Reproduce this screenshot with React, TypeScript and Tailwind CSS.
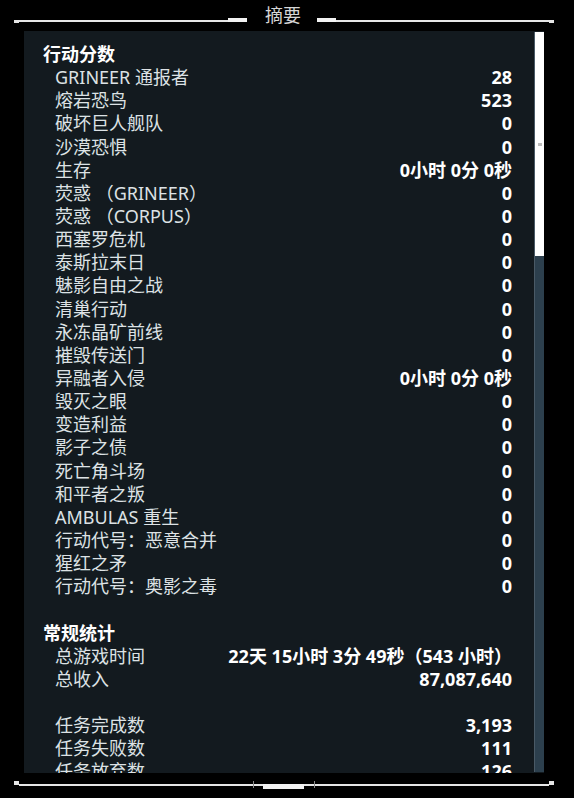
const missionScores: [string, string][] = [
  ["GRINEER 通报者", "28"],
  ["熔岩恐鸟", "523"],
  ["破坏巨人舰队", "0"],
  ["沙漠恐惧", "0"],
  ["生存", "0小时 0分 0秒"],
  ["荧惑 （GRINEER）", "0"],
  ["荧惑 （CORPUS）", "0"],
  ["西塞罗危机", "0"],
  ["泰斯拉末日", "0"],
  ["魅影自由之战", "0"],
  ["清巢行动", "0"],
  ["永冻晶矿前线", "0"],
  ["摧毁传送门", "0"],
  ["异融者入侵", "0小时 0分 0秒"],
  ["毁灭之眼", "0"],
  ["变造利益", "0"],
  ["影子之债", "0"],
  ["死亡角斗场", "0"],
  ["和平者之叛", "0"],
  ["AMBULAS 重生", "0"],
  ["行动代号：恶意合并", "0"],
  ["猩红之矛", "0"],
  ["行动代号：奥影之毒", "0"],
];

const Row = ({ label, value }: { label: string; value: string }) => (
  <div className="flex justify-between pl-[12px] h-[23.15px]">
    <span className="text-[#dde2e5] whitespace-nowrap">{label}</span>
    <span className="text-white font-bold whitespace-nowrap">{value}</span>
  </div>
);

const Header = ({ title }: { title: string }) => (
  <div className="h-[23.15px] font-bold text-white">{title}</div>
);

export default function App() {
  return (
    <div
      className="w-[574px] h-[798px] bg-black flex flex-col overflow-hidden"
      style={{ fontFamily: '"Noto Sans", "Noto Sans CJK SC", sans-serif' }}
    >
      {/* top frame */}
      <div className="h-[31px] flex items-start pl-[14px]">
        <div className="mt-[20px] w-[5px] h-[3px] bg-[#e6e6e6]" />
        <div className="mt-[20px] w-[209px] h-[2px] bg-[#e6e6e6]" />
        <div className="mt-[18px] w-[19px] h-[4px] bg-[#f2f2f2]" />
        <div className="w-[18px]" />
        <div className="w-[36px] text-[18px] leading-[30px] text-[#d6d6d6] whitespace-nowrap">摘要</div>
        <div className="w-[16px]" />
        <div className="mt-[18px] w-[19px] h-[4px] bg-[#f2f2f2]" />
        <div className="mt-[20px] w-[213px] h-[2px] bg-[#e6e6e6]" />
        <div className="mt-[20px] w-[5px] h-[3px] bg-[#e6e6e6]" />
      </div>

      {/* panel */}
      <div className="ml-[24px] w-[520px] h-[742px] bg-[#131a1f] flex overflow-hidden">
        <div className="flex-1 pl-[19px] pr-[22px] pt-[12px] text-[18px] leading-[23.15px] overflow-hidden">
          <Header title="行动分数" />
          {missionScores.map(([l, v]) => (
            <Row key={l} label={l} value={v} />
          ))}
          <div className="h-[23.15px]" />
          <Header title="常规统计" />
          <Row label="总游戏时间" value="22天 15小时 3分 49秒（543 小时）" />
          <Row label="总收入" value="87,087,640" />
          <div className="h-[23.15px]" />
          <Row label="任务完成数" value="3,193" />
          <Row label="任务失败数" value="111" />
          <Row label="任务放弃数" value="126" />
        </div>
        {/* scrollbar */}
        <div className="w-[10px] mt-[1px] mb-[1px] flex flex-col bg-[#2c3f4d] border-l border-[#4a5a66]">
          <div className="h-[224px] bg-white flex items-center justify-center">
            <div className="w-[4px] h-[3px] bg-[#bdbdbd]" />
          </div>
        </div>
      </div>

      {/* bottom frame */}
      <div className="mt-[8px] flex items-start pl-[14px]">
        <div className="w-[5px] h-[4px] bg-[#e6e6e6]" />
        <div className="mt-[3px] w-[234px] h-[2px] bg-[#e6e6e6]" />
        <div className="w-[1px] h-[7px] bg-[#8a8a8a]" />
        <div className="mt-[3px] w-[9px] h-[2px] bg-[#e6e6e6]" />
        <div className="mt-[3px] w-[41px] h-[5px] bg-[#f2f2f2]" />
        <div className="mt-[3px] w-[10px] h-[2px] bg-[#e6e6e6]" />
        <div className="w-[1px] h-[7px] bg-[#8a8a8a]" />
        <div className="mt-[3px] w-[234px] h-[2px] bg-[#e6e6e6]" />
        <div className="w-[5px] h-[4px] bg-[#e6e6e6]" />
      </div>
    </div>
  );
}
